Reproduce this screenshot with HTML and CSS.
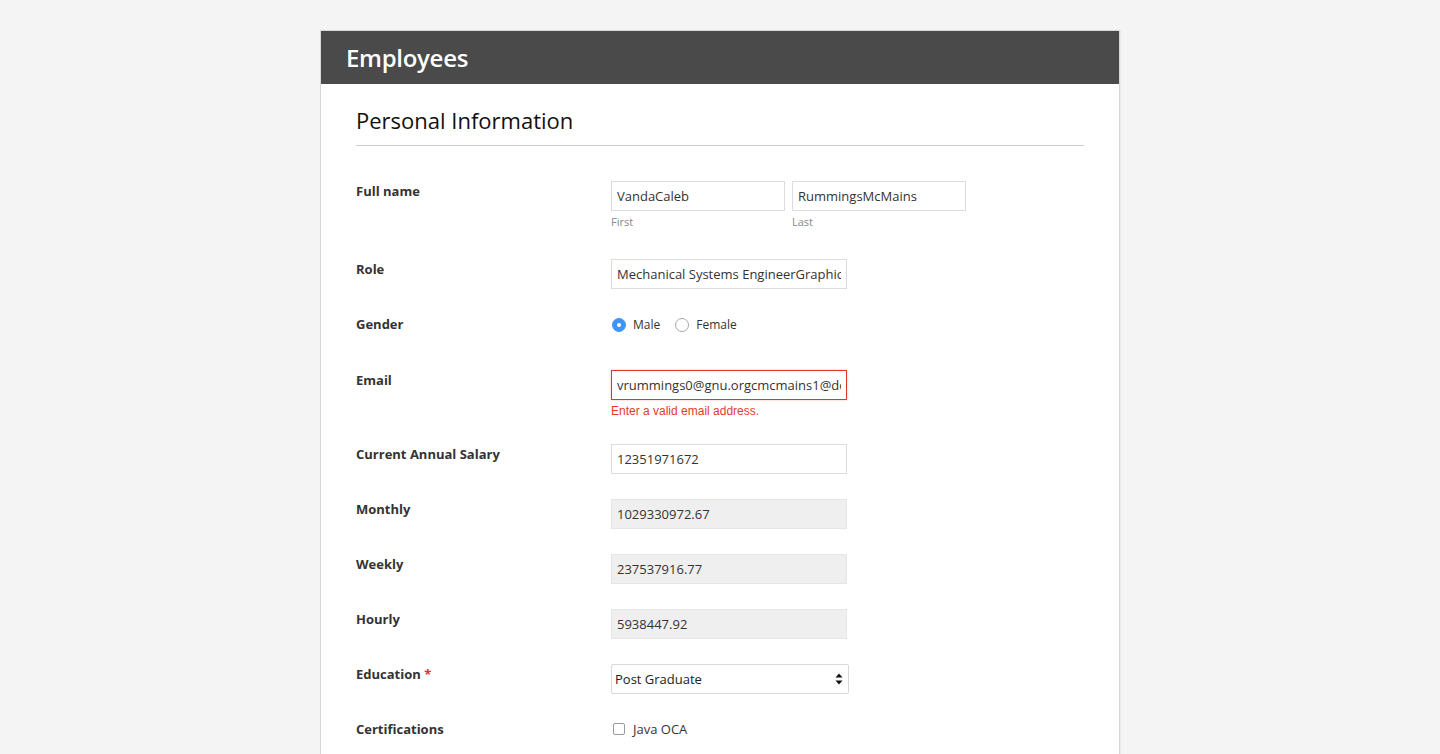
FILE: index.html
```html
<!DOCTYPE html>
<html>
<head>
<meta charset="utf-8">
<link rel="stylesheet" href="styles.css">
</head>
<body>
<div class="card">
  <div class="card-header">Employees</div>
  <div class="card-body">
    <h2 class="section-title">Personal Information</h2>
    <div class="form">
      <div class="row row-name">
        <div class="label">Full name</div>
        <div class="control name-group">
          <div class="name-part">
            <input class="input input-half" type="text" value="VandaCaleb">
            <div class="sublabel">First</div>
          </div>
          <div class="name-part">
            <input class="input input-half" type="text" value="RummingsMcMains">
            <div class="sublabel">Last</div>
          </div>
        </div>
      </div>
      <div class="row">
        <div class="label">Role</div>
        <div class="control"><input class="input" type="text" value="Mechanical Systems EngineerGraphic Designer"></div>
      </div>
      <div class="row row-gender">
        <div class="label">Gender</div>
        <div class="control radios">
          <label class="radio"><span class="radio-dot checked"></span>Male</label>
          <label class="radio"><span class="radio-dot"></span>Female</label>
        </div>
      </div>
      <div class="row row-email">
        <div class="label">Email</div>
        <div class="control">
          <input class="input input-error" type="text" value="vrummings0@gnu.orgcmcmains1@dell.com">
          <div class="error">Enter a valid email address.</div>
        </div>
      </div>
      <div class="row">
        <div class="label">Current Annual Salary</div>
        <div class="control"><input class="input" type="text" value="12351971672"></div>
      </div>
      <div class="row">
        <div class="label">Monthly</div>
        <div class="control"><input class="input input-ro" type="text" value="1029330972.67" readonly></div>
      </div>
      <div class="row">
        <div class="label">Weekly</div>
        <div class="control"><input class="input input-ro" type="text" value="237537916.77" readonly></div>
      </div>
      <div class="row">
        <div class="label">Hourly</div>
        <div class="control"><input class="input input-ro" type="text" value="5938447.92" readonly></div>
      </div>
      <div class="row">
        <div class="label">Education <span class="req">*</span></div>
        <div class="control">
          <div class="select-wrap">
            <select class="select"><option>Post Graduate</option></select>
            <svg class="select-arrows" width="8" height="12" viewBox="0 0 8 12"><path d="M4 0.5 L7.5 4.5 H0.5 Z M4 11.5 L7.5 7.5 H0.5 Z" fill="#111"/></svg>
          </div>
        </div>
      </div>
      <div class="row row-cert">
        <div class="label">Certifications</div>
        <div class="control">
          <label class="check"><span class="check-box"></span>Java OCA</label>
        </div>
      </div>
    </div>
  </div>
</div>
</body>
</html>
```
FILE: styles.css
```css
html, body {
  margin: 0;
  padding: 0;
  background: #f4f4f4;
  font-family: "Open Sans", "Liberation Sans", sans-serif;
  color: #333;
}
body {
  padding-top: 30px;
}
.card {
  width: 798px;
  margin: 0 auto;
  background: #fff;
  border: 1px solid #d6d6d6;
  border-bottom: none;
  min-height: 740px;
  box-shadow: 1px 0 1px rgba(0,0,0,0.04);
}
.card-header {
  background: #4a4a4a;
  color: #fff;
  font-size: 24px;
  font-weight: 600;
  height: 53px;
  line-height: 54px;
  padding-left: 25px;
  letter-spacing: -0.3px;
}
.card-body {
  padding: 21px 35px 0 35px;
}
.section-title {
  margin: 0;
  font-size: 22px;
  font-weight: 400;
  color: #111;
  line-height: 30px;
  padding-bottom: 10px;
  border-bottom: 1px solid #cfcfcf;
}
.form {
  padding-top: 35px;
}
.row {
  display: grid;
  grid-template-columns: 255px 1fr;
  margin-bottom: 25px;
}
.row-name { margin-bottom: 29px; }
.row-gender { margin-bottom: 35px; }
.row-email { margin-bottom: 26px; }
.label {
  font-size: 13px;
  font-weight: 700;
  line-height: 20px;
  color: #333;
}
.req { color: #e0322b; }
.control {
  font-size: 13px;
}
.name-group {
  display: flex;
  gap: 7px;
}
.input {
  box-sizing: border-box;
  width: 236px;
  height: 30px;
  border: 1px solid #dcdcdc;
  padding: 0 5px;
  font-family: "Open Sans", sans-serif;
  font-size: 13px;
  color: #333;
  background: #fff;
  outline: none;
  display: block;
  margin: 0;
}
.input-half { width: 174px; }
.input-ro {
  background: #efefef;
  border-color: #e6e6e6;
}
.input-error {
  border-color: #e3342b;
  box-shadow: 0 0 2px rgba(227,52,43,0.35);
}
.sublabel {
  font-size: 11px;
  color: #888;
  line-height: 16px;
  margin-top: 3px;
}
.error {
  font-family: "Liberation Sans", Arial, sans-serif;
  font-size: 12px;
  color: #e8392c;
  line-height: 14px;
  margin-top: 4px;
}
.radios {
  display: flex;
  align-items: center;
  gap: 14px;
  font-size: 12px;
  color: #333;
  line-height: 20px;
  padding-top: 1px;
}
.radio {
  display: flex;
  align-items: center;
  gap: 7px;
}
.radio-dot {
  box-sizing: border-box;
  width: 14px;
  height: 14px;
  border-radius: 50%;
  border: 1px solid #a8a8a8;
  background: #fff;
  margin-left: 1px;
  position: relative;
}
.radio-dot.checked {
  background: #3d95f5;
  border-color: #3d95f5;
}
.radio-dot.checked::after {
  content: "";
  position: absolute;
  left: 4px;
  top: 4px;
  width: 4px;
  height: 4px;
  border-radius: 50%;
  background: #fff;
}
.select-wrap {
  position: relative;
  width: 238px;
}
.select {
  -webkit-appearance: none;
  appearance: none;
  box-sizing: border-box;
  width: 238px;
  height: 30px;
  border: 1px solid #d9d9d9;
  border-radius: 2px;
  background: #fff;
  font-family: "Open Sans", sans-serif;
  font-size: 13px;
  color: #222;
  padding: 0 3px;
  outline: none;
}
.select-arrows {
  position: absolute;
  right: 6px;
  top: 9px;
}
.row-cert .control {
  padding-top: 1px;
}
.check {
  display: flex;
  align-items: center;
  gap: 8px;
  font-size: 13px;
  color: #333;
  line-height: 18px;
}
.check-box {
  box-sizing: border-box;
  width: 12px;
  height: 12px;
  border: 1px solid #999;
  border-radius: 2px;
  background: #fff;
  margin-left: 2px;
}
```
